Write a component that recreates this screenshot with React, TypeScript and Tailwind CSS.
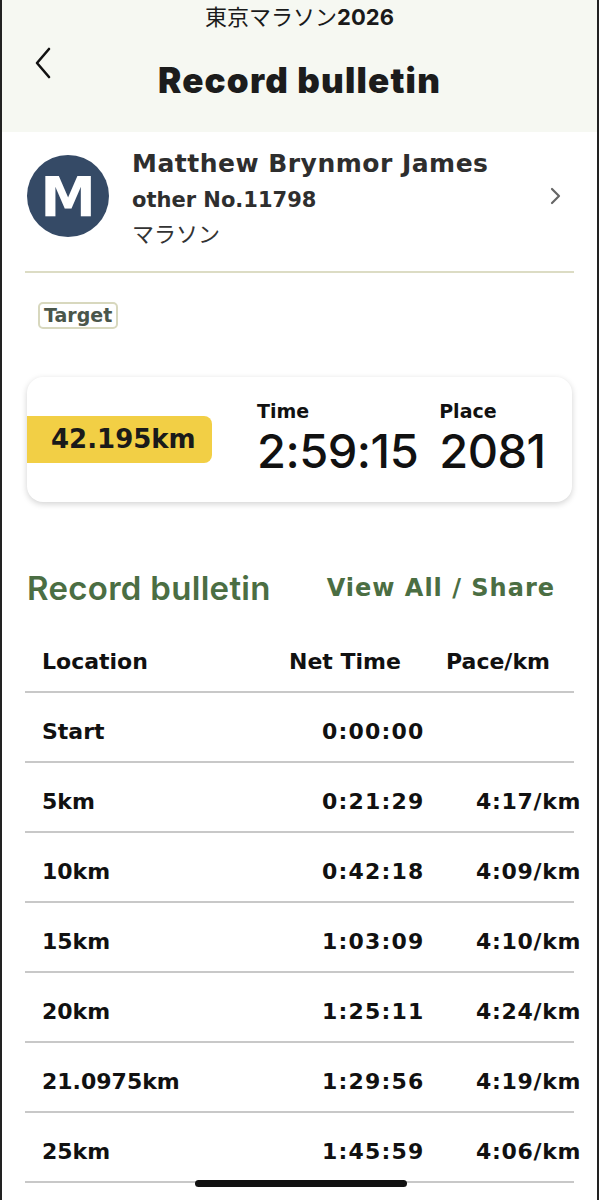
import React from "react";

const rows = [
  ["Start", "0:00:00", ""],
  ["5km", "0:21:29", "4:17/km"],
  ["10km", "0:42:18", "4:09/km"],
  ["15km", "1:03:09", "4:10/km"],
  ["20km", "1:25:11", "4:24/km"],
  ["21.0975km", "1:29:56", "4:19/km"],
  ["25km", "1:45:59", "4:06/km"],
];

const dv = { fontFamily: "'DejaVu Sans', Verdana, sans-serif" };

export default function App() {
  return (
    <div
      className="relative w-[599px] h-[1200px] overflow-hidden bg-white border-l-2 border-r-2 border-[#222]"
      style={{ fontFamily: "Inter, 'Noto Sans CJK JP', sans-serif" }}
    >
      <div className="bg-[#f6f8f2] h-[132px] relative">
        <div className="pt-[1px] text-center text-[22px] leading-[28px] text-[#1a1a1a]" style={{ fontFamily: "'Noto Sans CJK JP', sans-serif" }}>
          東京マラソン<span className="font-bold" style={{ fontFamily: "Inter, sans-serif" }}>2026</span>
        </div>
        <div className="absolute left-[30px] top-[46px]">
          <svg width="22" height="34" viewBox="0 0 22 34" fill="none">
            <path d="M17 3 L5 17 L17 31" stroke="#111" strokeWidth="2.6" strokeLinecap="round" strokeLinejoin="round" />
          </svg>
        </div>
        <div className="mt-[29px] text-center text-[35px] leading-[40px] font-black text-[#1c1c1c] tracking-[1.2px]">
          Record bulletin
        </div>
      </div>

      <div className="px-[23px]">
        <div className="flex items-center pt-[14px] pb-[25px] border-b-2 border-[#dcdcc4]">
          <div className="w-[82px] h-[82px] ml-[2px] rounded-full bg-[#354a66] flex items-center justify-center shrink-0">
            <span className="text-white text-[56px] font-bold leading-none mt-[1px]" style={dv}>M</span>
          </div>
          <div className="ml-[23px] flex-1 text-[#2e2e2e]" style={dv}>
            <div className="text-[25px] leading-[36px] font-bold tracking-[0.5px]">Matthew Brynmor James</div>
            <div className="text-[21px] leading-[36px] font-bold">other No.11798</div>
            <div className="text-[22px] leading-[28px] text-[#333]" style={{ fontFamily: "'Noto Sans CJK JP', sans-serif" }}>マラソン</div>
          </div>
          <svg width="14" height="20" viewBox="0 0 14 20" className="mr-[12px]">
            <path d="M4 3 L11 10 L4 17" stroke="#666" strokeWidth="2.2" fill="none" strokeLinecap="round" strokeLinejoin="round" />
          </svg>
        </div>

        <div className="pt-[29px] pl-[13px] flex">
          <span className="inline-block border-2 border-[#d8d8be] rounded-[5px] px-[4px] text-[19px] leading-[23px] font-bold text-[#4a564a]" style={dv}>
            Target
          </span>
        </div>

        <div className="mt-[48px] h-[125px] ml-[2px] mr-[2px] rounded-[16px] bg-white shadow-[0_2px_6px_rgba(0,0,0,0.18)] flex items-center">
          <div className="w-[185px] h-[47px] bg-[#f2cf45] rounded-r-[8px] flex items-center pl-[24px] text-[26px] font-bold text-[#1a1a1a] shrink-0" style={dv}>
            42.195km
          </div>
          <div className="ml-[45px] flex flex-col mt-[-4px]">
            <div className="text-[19px] leading-[22px] font-bold text-[#111]" style={dv}>Time</div>
            <div className="mt-[4px] text-[47px] leading-[50px] font-medium text-[#111] tracking-[-0.5px]">2:59:15</div>
          </div>
          <div className="ml-[21px] flex flex-col mt-[-4px]">
            <div className="text-[19px] leading-[22px] font-bold text-[#111]" style={dv}>Place</div>
            <div className="mt-[4px] text-[47px] leading-[50px] font-medium text-[#111] tracking-[-0.5px]">2081</div>
          </div>
        </div>

        <div className="mt-[66px] flex items-center justify-between pl-[2px] pr-[19px]">
          <div className="text-[33px] leading-[40px] font-semibold text-[#4b6e43] tracking-[0.3px]">Record bulletin</div>
          <div className="text-[24px] leading-[40px] font-bold text-[#4b6e43] tracking-[1px]" style={dv}>View All / Share</div>
        </div>

        <div className="mt-[15px] text-[22px] font-bold text-[#111]" style={dv}>
          <div className="flex items-center h-[70px] pt-[8px] border-b-2 border-[#c8c8c8] whitespace-nowrap">
            <div className="w-[264px] pl-[17px] shrink-0">Location</div>
            <div className="w-[157px] shrink-0">Net Time</div>
            <div className="shrink-0">Pace/km</div>
          </div>
          {rows.map((r) => (
            <div key={r[0]} className="flex items-center h-[70px] pt-[8px] border-b-2 border-[#c8c8c8] whitespace-nowrap">
              <div className="w-[297px] pl-[17px] shrink-0">{r[0]}</div>
              <div className="w-[154px] tracking-[1.2px] shrink-0">{r[1]}</div>
              <div className="tracking-[0.7px] shrink-0">{r[2]}</div>
            </div>
          ))}
        </div>
      </div>

      <div className="absolute left-[193px] top-[1180px] w-[212px] h-[7px] rounded-full bg-[#111]" />
    </div>
  );
}
